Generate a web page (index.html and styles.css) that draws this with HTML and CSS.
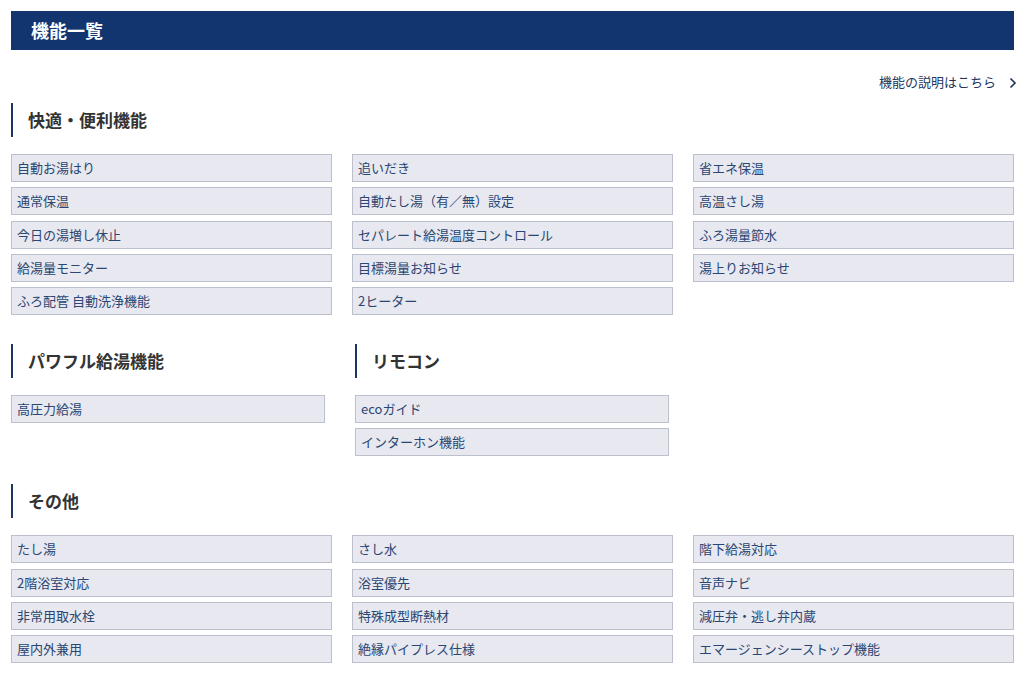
FILE: index.html
```html
<!DOCTYPE html>
<html lang="ja">
<head>
<meta charset="utf-8">
<title>機能一覧</title>
<link rel="stylesheet" href="styles.css">
</head>
<body>
<div class="page">
  <h1 class="page-title">機能一覧</h1>
  <div class="more-row">
    <a class="more-link" href="#">機能の説明はこちら
      <svg class="chev" width="8" height="12" viewBox="0 0 8 12"><path d="M1.5 1.5 L6 6 L1.5 10.5" fill="none" stroke="#1d2f55" stroke-width="1.6"/></svg>
    </a>
  </div>

  <section class="sec">
    <h2 class="sec-title">快適・便利機能</h2>
    <div class="grid3">
      <div class="col">
        <div class="cell">自動お湯はり</div>
        <div class="cell">通常保温</div>
        <div class="cell">今日の湯増し休止</div>
        <div class="cell">給湯量モニター</div>
        <div class="cell">ふろ配管 自動洗浄機能</div>
      </div>
      <div class="col">
        <div class="cell">追いだき</div>
        <div class="cell">自動たし湯（有／無）設定</div>
        <div class="cell">セパレート給湯温度コントロール</div>
        <div class="cell">目標湯量お知らせ</div>
        <div class="cell">2ヒーター</div>
      </div>
      <div class="col">
        <div class="cell">省エネ保温</div>
        <div class="cell">高温さし湯</div>
        <div class="cell">ふろ湯量節水</div>
        <div class="cell">湯上りお知らせ</div>
      </div>
    </div>
  </section>

  <div class="pair">
    <section class="sec half">
      <h2 class="sec-title">パワフル給湯機能</h2>
      <div class="col">
        <div class="cell">高圧力給湯</div>
      </div>
    </section>
    <section class="sec half">
      <h2 class="sec-title">リモコン</h2>
      <div class="col">
        <div class="cell">ecoガイド</div>
        <div class="cell">インターホン機能</div>
      </div>
    </section>
  </div>

  <section class="sec">
    <h2 class="sec-title">その他</h2>
    <div class="grid3">
      <div class="col">
        <div class="cell">たし湯</div>
        <div class="cell">2階浴室対応</div>
        <div class="cell">非常用取水栓</div>
        <div class="cell">屋内外兼用</div>
      </div>
      <div class="col">
        <div class="cell">さし水</div>
        <div class="cell">浴室優先</div>
        <div class="cell">特殊成型断熱材</div>
        <div class="cell">絶縁パイプレス仕様</div>
      </div>
      <div class="col">
        <div class="cell">階下給湯対応</div>
        <div class="cell">音声ナビ</div>
        <div class="cell">減圧弁・逃し弁内蔵</div>
        <div class="cell">エマージェンシーストップ機能</div>
      </div>
    </div>
  </section>
</div>
</body>
</html>
```

FILE: styles.css
```css
* { box-sizing: border-box; }
html, body { margin: 0; padding: 0; background: #fff; }
body {
  font-family: "Noto Sans CJK JP", "Noto Sans", sans-serif;
  color: #333;
}
.page {
  margin: 0 10px 0 11px;
  padding-top: 11px;
}
.page-title {
  margin: 0;
  height: 39px;
  background: #12356f;
  color: #fff;
  font-size: 18px;
  font-weight: 700;
  line-height: 39px;
  padding-left: 20px;
}
.more-row {
  display: flex;
  justify-content: flex-end;
  margin-top: 21px;
  height: 22px;
}
.more-link {
  display: flex;
  align-items: center;
  gap: 13px;
  font-size: 13px;
  color: #24365a;
  text-decoration: none;
  line-height: 22px;
  margin-right: -3px;
}
.chev { display: block; margin-top: 1px; }
.sec { margin-top: 10px; }
.sec-title {
  margin: 0;
  height: 34px;
  border-left: 2px solid #1e3560;
  padding-left: 15px;
  font-size: 17px;
  font-weight: 700;
  line-height: 34px;
  color: #333;
}
.grid3 {
  margin-top: 17px;
  display: grid;
  grid-template-columns: repeat(3, 1fr);
  column-gap: 20px;
}
.col {
  display: flex;
  flex-direction: column;
  gap: 5.25px;
}
.half .col { margin-top: 17px; }
.cell {
  height: 28px;
  background: #e7e8f0;
  border: 1px solid #bcc0cc;
  color: #2a4672;
  font-size: 13px;
  line-height: 26px;
  padding-left: 5px;
  white-space: nowrap;
}
.pair {
  display: flex;
  gap: 30px;
  margin-top: 29px;
}
.pair .sec { margin-top: 0; width: 314px; }
.pair + .sec { margin-top: 28px; }
```
